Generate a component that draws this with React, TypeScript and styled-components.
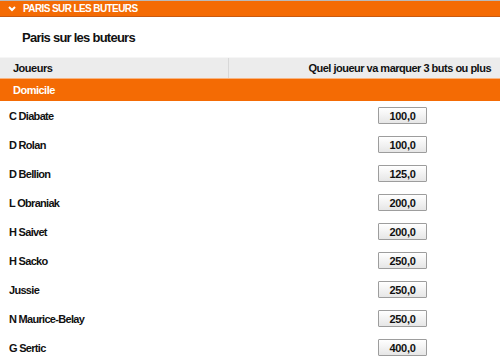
import styled, { createGlobalStyle } from "styled-components";

const GlobalStyle = createGlobalStyle`
  body {
    margin: 0;
    background: #ffffff;
    font-family: "Liberation Sans", Arial, sans-serif;
  }
`;

const StyledPanel = styled.div`
  width: 500px;
  background-color: white;
`;
const StyledTopBar = styled.div`
  height: 15px;
  border-top: 1px solid #b9b9b9;
  border-bottom: 1px solid #c95a10;
  background-color: #f46b04;
  display: flex;
  align-items: center;
  padding-left: 8px;
  gap: 7px;
  color: white;
  font-size: 10px;
  font-weight: bold;
  letter-spacing: -0.6px;
  text-transform: uppercase;
`;
const StyledTitle = styled.div`
  height: 40px;
  display: flex;
  align-items: center;
  padding-left: 22px;
  font-size: 13px;
  font-weight: bold;
  letter-spacing: -0.75px;
  color: #111;
`;
const StyledTableHeader = styled.div`
  height: 20px;
  background-color: #ececec;
  border-top: 1px solid #f6f6f6;
  display: flex;
  font-size: 11px;
  font-weight: bold;
  letter-spacing: -0.5px;
  color: #111;
`;
const StyledHeaderCell = styled.div<{ right?: boolean }>`
  flex: ${props => props.right ? 1 : "0 0 228px"};
  display: flex;
  align-items: center;
  justify-content: ${props => props.right ? "flex-end" : "flex-start"};
  padding: 0 9px 0 13px;
  box-sizing: border-box;
  border-left: ${props => props.right ? "1px solid #d8d8d8" : "none"};
`;
const StyledGroupRow = styled.div`
  height: 22px;
  border-top: 1px solid #f9b47f;
  background-color: #f46b04;
  display: flex;
  align-items: center;
  padding-left: 13px;
  color: white;
  font-size: 11px;
  font-weight: bold;
  letter-spacing: -0.5px;
`;
const StyledRow = styled.div`
  height: 29px;
  display: flex;
  align-items: center;
  font-size: 11px;
  font-weight: bold;
  letter-spacing: -0.7px;
  color: #111;
`;
const StyledNameCell = styled.div`
  flex: 0 0 378px;
  padding-left: 9px;
  box-sizing: border-box;
`;
const StyledOdds = styled.button`
  width: 49px;
  height: 17px;
  padding: 0;
  border: 1px solid #9d9d9d;
  border-radius: 1px;
  background: linear-gradient(#ffffff, #e6e6e6);
  font-family: "Liberation Sans", Arial, sans-serif;
  font-size: 11px;
  font-weight: bold;
  letter-spacing: -0.3px;
  color: #111;
  cursor: pointer;
`;

const players = [
  { name: "C Diabate", odds: "100,0" },
  { name: "D Rolan", odds: "100,0" },
  { name: "D Bellion", odds: "125,0" },
  { name: "L Obraniak", odds: "200,0" },
  { name: "H Saivet", odds: "200,0" },
  { name: "H Sacko", odds: "250,0" },
  { name: "Jussie", odds: "250,0" },
  { name: "N Maurice-Belay", odds: "250,0" },
  { name: "G Sertic", odds: "400,0" },
];

function App() {
  return (
    <StyledPanel>
      <GlobalStyle />
      <StyledTopBar>
        <svg width="8" height="6" viewBox="0 0 8 6">
          <path d="M1 1 L4 4 L7 1" stroke="white" strokeWidth="2" fill="none" />
        </svg>
        Paris sur les buteurs
      </StyledTopBar>
      <StyledTitle>Paris sur les buteurs</StyledTitle>
      <StyledTableHeader>
        <StyledHeaderCell>Joueurs</StyledHeaderCell>
        <StyledHeaderCell right>Quel joueur va marquer 3 buts ou plus</StyledHeaderCell>
      </StyledTableHeader>
      <StyledGroupRow>Domicile</StyledGroupRow>
      {players.map(player => (
        <StyledRow key={player.name}>
          <StyledNameCell>{player.name}</StyledNameCell>
          <StyledOdds>{player.odds}</StyledOdds>
        </StyledRow>
      ))}
    </StyledPanel>
  );
}

export default App;
